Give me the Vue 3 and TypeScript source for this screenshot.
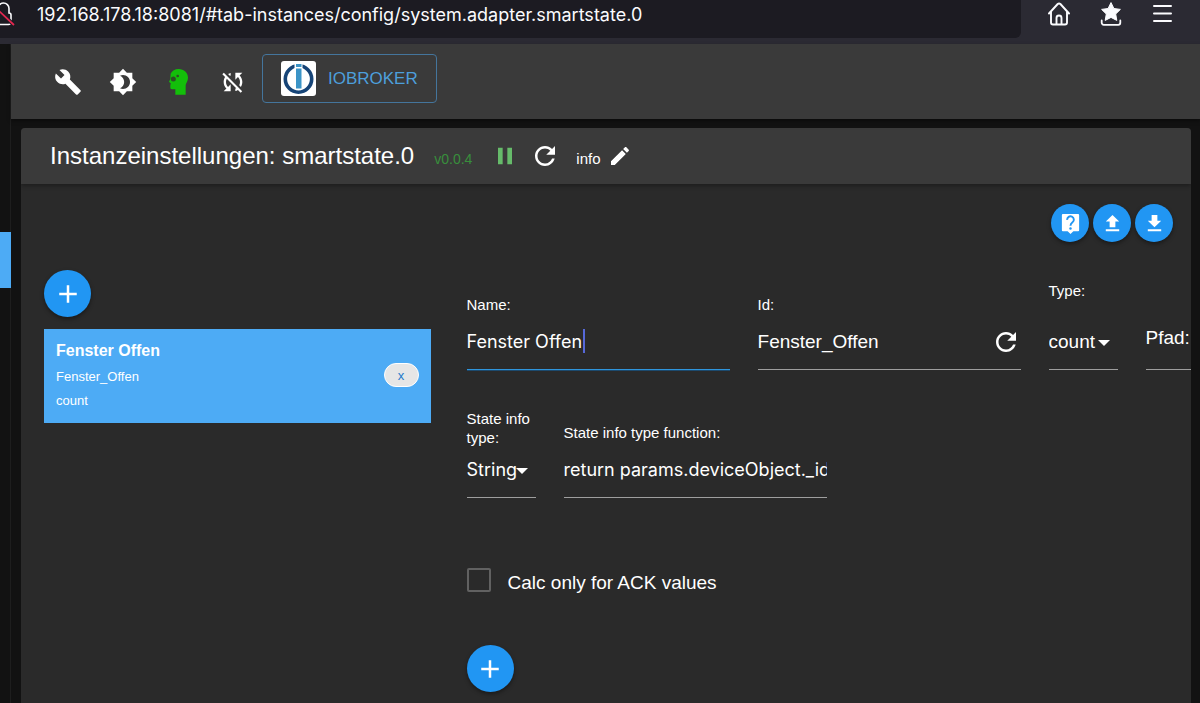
<script setup lang="ts">
import { ref } from 'vue'

interface IconDef {
  id: string
  label: string
  path: string
}

const url = ref('192.168.178.18:8081/#tab-instances/config/system.adapter.smartstate.0')

const refreshPath =
  'M17.65 6.35C16.2 4.9 14.21 4 12 4c-4.42 0-7.99 3.58-7.99 8s3.57 8 7.99 8c3.73 0 6.84-2.55 7.73-6h-2.08c-.82 2.33-3.04 4-5.65 4-3.31 0-6-2.69-6-6s2.69-6 6-6c1.66 0 3.14.69 4.22 1.78L13 11h7V4l-2.35 2.35z'
const plusPath = 'M19 13h-6v6h-2v-6H5v-2h6V5h2v6h6v2z'

const transferButtons: IconDef[] = [
  { id: 'upload', label: 'Upload', path: 'M5 20h14v-2H5v2zm0-10h4v6h6v-6h4l-7-7-7 7z' },
  { id: 'download', label: 'Download', path: 'M19 9h-4V3H9v6H5l7 7 7-7zM5 18v2h14v-2H5z' },
]

const form = ref({
  name: 'Fenster Offen',
  id: 'Fenster_Offen',
  type: 'count',
  path: '',
  infoType: 'String',
  infoFunction: 'return params.deviceObject._id',
  ackOnly: false,
})
</script>

<template>
  <div class="window">
    <header class="browser-bar">
      <div class="address">
        <svg class="lock" viewBox="0 0 15 30" aria-hidden="true">
          <path d="M-4 24.500H8.500a2.500 2.500 0 0 0 2.500-2.500V15a2 2 0 0 0-2-2V8.500A5.500 5.500 0 0 0-2 8.500" fill="none" stroke="#fbfbfe" stroke-width="1.600" />
          <path d="M-2 10L14 25" stroke="#1c1b22" stroke-width="4" />
          <path d="M-2 10L14 25" stroke="#e22850" stroke-width="1.800" />
        </svg>
        <input v-model="url" class="url" type="text" aria-label="URL" />
      </div>
      <div class="browser-actions">
        <button type="button" class="plain" aria-label="Home">
          <svg width="24" height="24" viewBox="0 0 24 24" fill="none" stroke="#fbfbfe" stroke-width="1.900" stroke-linecap="round" stroke-linejoin="round">
            <path d="M2 11.500L10.700 2a2 2 0 0 1 2.700 0L22 11.500" />
            <path d="M4 10v10.500a2 2 0 0 0 2 2h12a2 2 0 0 0 2-2V10" />
            <path d="M9.500 22V16a2.500 2.500 0 0 1 5 0v6" />
          </svg>
        </button>
        <button type="button" class="plain" aria-label="Bookmarks">
          <svg width="24" height="24" viewBox="0 0 24 24">
            <path d="M12 0.600l2.900 5.900 6.500.9-4.700 4.600 1.100 6.400-5.800-3-5.800 3 1.100-6.400L2.600 7.400l6.500-.9z" fill="#fbfbfe" stroke="#fbfbfe" stroke-linejoin="round" />
            <path d="M2.700 18.500v2.300a2 2 0 0 0 2 2h14.600a2 2 0 0 0 2-2v-2.300" fill="none" stroke="#fbfbfe" stroke-width="1.800" stroke-linecap="round" />
          </svg>
        </button>
        <button type="button" class="plain" aria-label="Menu">
          <svg width="24" height="24" viewBox="0 0 24 24" stroke="#fbfbfe" stroke-width="2" stroke-linecap="round">
            <path d="M3 4h17M3 11.500h17M3 19h17" />
          </svg>
        </button>
      </div>
    </header>

    <div class="app">
      <nav class="side">
        <a href="#tab-instances" class="side-active" aria-label="Instances"></a>
      </nav>

      <div class="main">
        <div class="toolbar">
          <div class="tools">
            <button type="button" class="plain" aria-label="Settings">
              <svg width="28" height="28" viewBox="0 0 24 24" fill="#fff">
                <path d="M22.700 19l-9.100-9.100c.9-2.300.4-5-1.500-6.900-2-2-5-2.400-7.400-1.300L9 6 6 9 1.600 4.700C.4 7.100.9 10.100 2.900 12.100c1.900 1.900 4.600 2.400 6.900 1.500l9.100 9.100c.4.4 1 .4 1.400 0l2.300-2.300c.5-.4.5-1.100.1-1.400z" />
              </svg>
            </button>
            <button type="button" class="plain" aria-label="Theme">
              <svg width="28" height="28" viewBox="0 0 24 24" fill="#fff">
                <path d="M20 8.690V4h-4.690L12 .69 8.690 4H4v4.690L.69 12 4 15.310V20h4.690L12 23.310 15.310 20H20v-4.690L23.310 12 20 8.690zM12 18c-.89 0-1.740-.2-2.500-.55C11.560 16.500 13 14.420 13 12s-1.440-4.500-3.500-5.450C10.260 6.200 11.110 6 12 6c3.310 0 6 2.690 6 6s-2.690 6-6 6z" />
              </svg>
            </button>
            <button type="button" class="plain" aria-label="Expert mode">
              <svg width="28" height="28" viewBox="0 0 84 84">
                <path d="M20 17C24 8 33 3 44 3C60 3 72 14 72 29C72 40 66 44 65 52V80H34V64H24C20 64 19 62 19 58V50L21 47L15 41L19 33Z" fill="#13bf0a" />
                <circle cx="28" cy="33" r="7.500" fill="#2c4f24" />
                <circle cx="41" cy="24" r="4" fill="#2c4f24" />
              </svg>
            </button>
            <button type="button" class="plain" aria-label="Sync disabled">
              <svg width="28" height="28" viewBox="0 0 24 24" fill="#fff">
                <path d="M10 6.350V4.260c-.8.21-1.550.54-2.230.96l1.460 1.460c.25-.12.5-.24.77-.33zm-7.140-.94l2.360 2.360C4.450 8.990 4 10.440 4 12c0 2.210.91 4.200 2.360 5.640L4 20h6v-6l-2.240 2.240C6.680 15.150 6 13.660 6 12c0-1 .25-1.940.68-2.770l8.080 8.080c-.25.13-.5.25-.77.34v2.090c.8-.21 1.550-.54 2.230-.96l2.360 2.360 1.270-1.270L4.140 4.140 2.860 5.410zM20 4h-6v6l2.240-2.240C17.320 8.850 18 10.340 18 12c0 1-.25 1.940-.68 2.770l1.460 1.460C19.550 15.010 20 13.560 20 12c0-2.210-.91-4.200-2.360-5.640L20 4z" />
              </svg>
            </button>
          </div>
          <button type="button" class="host">
            <svg width="35" height="35" viewBox="0 0 35 35" aria-hidden="true">
              <rect width="35" height="35" rx="3" fill="#fff" />
              <circle cx="17.500" cy="18" r="13.200" fill="none" stroke="#164477" stroke-width="3.600" />
              <rect x="13.500" y="2" width="8" height="6" fill="#fff" />
              <path d="M15 3h5.500v3H15zM15 7.500h5.500v20H15z" fill="#3b94c7" />
            </svg>
            <span>IOBROKER</span>
          </button>
        </div>

        <section class="panel">
          <header class="panel-head">
            <h1>Instanzeinstellungen: smartstate.0</h1>
            <span class="version">v0.0.4</span>
            <button type="button" class="plain pause" aria-label="Pause">
              <svg width="28" height="28" viewBox="0 0 24 24" fill="#66bb6a">
                <path d="M6 19h4V5H6v14zm8-14v14h4V5h-4z" />
              </svg>
            </button>
            <button type="button" class="plain restart" aria-label="Restart">
              <svg width="30" height="30" viewBox="0 0 24 24" fill="#fff"><path :d="refreshPath" /></svg>
            </button>
            <span class="level">info</span>
            <button type="button" class="plain edit" aria-label="Edit log level">
              <svg width="24" height="24" viewBox="0 0 24 24" fill="#fff">
                <path d="M3 17.250V21h3.750L17.810 9.940l-3.750-3.750L3 17.250zM20.710 7.040c.39-.39.39-1.020 0-1.410l-2.340-2.340c-.39-.39-1.020-.39-1.410 0l-1.830 1.830 3.750 3.750 1.830-1.830z" />
              </svg>
            </button>
          </header>

          <div class="actions">
            <button type="button" class="round small" aria-label="Help">
              <svg width="23" height="23" viewBox="0 0 24 24">
                <path d="M4 2h16a1 1 0 0 1 1 1v16a1 1 0 0 1-1 1h-5l-3 3-3-3H4a1 1 0 0 1-1-1V3a1 1 0 0 1 1-1z" fill="#fff" />
                <path d="M8.500 8.200a3.500 3.500 0 1 1 5.600 2.600c-1.300 1-2.100 1.700-2.100 3.600" fill="none" stroke="#2196f3" stroke-width="2" />
                <circle cx="12" cy="17.200" r="1.300" fill="#2196f3" />
              </svg>
            </button>
            <button v-for="b in transferButtons" :key="b.id" type="button" class="round small" :aria-label="b.label">
              <svg width="23" height="23" viewBox="0 0 24 24" fill="#fff"><path :d="b.path" /></svg>
            </button>
          </div>

          <div class="columns">
            <div class="list">
              <button type="button" class="round" aria-label="Add entry">
                <svg width="30" height="30" viewBox="0 0 24 24" fill="#fff"><path :d="plusPath" /></svg>
              </button>
              <ul class="entries">
                <li class="entry">
                  <div>
                    <strong>{{ form.name }}</strong>
                    <p>{{ form.id }}</p>
                    <p>{{ form.type }}</p>
                  </div>
                  <button type="button" class="remove">x</button>
                </li>
              </ul>
            </div>

            <form class="form" @submit.prevent>
              <div class="row">
                <div class="field wide">
                  <label for="f-name">Name:</label>
                  <div class="control">
                    <input id="f-name" v-model="form.name" class="ui active" type="text" />
                    <span class="caret"></span>
                  </div>
                </div>
                <div class="field wide">
                  <label for="f-id">Id:</label>
                  <div class="control">
                    <input id="f-id" v-model="form.id" type="text" />
                    <button type="button" class="plain regenerate" aria-label="Regenerate id">
                      <svg width="30" height="30" viewBox="0 0 24 24" fill="#fff"><path :d="refreshPath" /></svg>
                    </button>
                  </div>
                </div>
                <div class="field">
                  <label for="f-type" class="two-line">Type:</label>
                  <div class="control">
                    <select id="f-type" v-model="form.type">
                      <option>count</option>
                    </select>
                    <svg class="arrow" width="12" height="6" viewBox="0 0 12 6"><path d="M0 0h12L6 6z" fill="#fff" /></svg>
                  </div>
                </div>
                <div class="field wide">
                  <div class="control">
                    <input id="f-path" v-model="form.path" type="text" />
                    <label for="f-path" class="inside">Pfad:</label>
                  </div>
                </div>
              </div>

              <div class="row">
                <div class="field">
                  <label for="f-info" class="two-line">State info type:</label>
                  <div class="control">
                    <select id="f-info" v-model="form.infoType" class="ui">
                      <option>String</option>
                    </select>
                    <svg class="arrow" width="12" height="6" viewBox="0 0 12 6"><path d="M0 0h12L6 6z" fill="#fff" /></svg>
                  </div>
                </div>
                <div class="field wide">
                  <label for="f-fn">State info type function:</label>
                  <div class="control">
                    <input id="f-fn" v-model="form.infoFunction" class="ui" type="text" />
                  </div>
                </div>
              </div>

              <label class="check">
                <input v-model="form.ackOnly" type="checkbox" />
                <span>Calc only for ACK values</span>
              </label>

              <button type="button" class="round" aria-label="Add state">
                <svg width="30" height="30" viewBox="0 0 24 24" fill="#fff"><path :d="plusPath" /></svg>
              </button>
            </form>
          </div>
        </section>
      </div>
    </div>
  </div>
</template>

<style>
body {
  margin: 0;
  background: #121212;
}
</style>

<style scoped>
* {
  box-sizing: border-box;
}

.window {
  display: flex;
  flex-direction: column;
  min-height: 100vh;
  color: #fff;
  font-family: "Liberation Sans", Arial, sans-serif;
}

button,
input,
select {
  margin: 0;
  padding: 0;
  border: 0;
  background: none;
  color: inherit;
  font-family: inherit;
  outline: none;
}

button {
  cursor: pointer;
}

.plain,
.round {
  display: flex;
  align-items: center;
  justify-content: center;
  flex: none;
}

.browser-bar {
  display: flex;
  height: 44px;
  padding-bottom: 6px;
  background: #2b2a33;
}

.address {
  display: flex;
  flex: 1;
  align-items: flex-start;
  background: #1c1b22;
  border-bottom-right-radius: 6px;
}

.lock {
  flex: none;
  width: 15px;
  height: 30px;
}

.url {
  flex: 1;
  height: 28px;
  padding-left: 22px;
  color: #fbfbfe;
  font-family: Inter, "Liberation Sans", sans-serif;
  font-size: 18px;
}

.browser-actions {
  display: flex;
  align-items: center;
  gap: 28px;
  height: 28px;
  padding: 0 25px 0 26px;
}

.app {
  display: flex;
  flex: 1;
}

.side {
  flex: none;
  width: 11px;
  padding-top: 188px;
  background: #121212;
  border-right: 1px solid #1e1e1e;
}

.side-active {
  display: block;
  height: 56px;
  margin-right: -1px;
  background: #4dabf5;
}

.main {
  display: flex;
  flex: 1;
  flex-direction: column;
  min-width: 0;
}

.toolbar {
  display: flex;
  align-items: flex-start;
  gap: 15px;
  height: 75px;
  padding-left: 43px;
  background: #3a3a3a;
  box-shadow: 0 2px 4px rgba(0, 0, 0, 0.4);
}

.tools {
  display: flex;
  align-items: center;
  gap: 27px;
  height: 75px;
}

.host {
  display: flex;
  align-items: center;
  gap: 12px;
  height: 49px;
  margin-top: 10px;
  padding: 0 18px;
  border: 1px solid #44759c;
  border-radius: 4px;
  color: #4d9fdc;
  font-size: 17px;
}

.panel {
  display: flex;
  flex: 1;
  flex-direction: column;
  margin: 9px 9px 0 10px;
  overflow: hidden;
  border-radius: 4px 4px 0 0;
  background: #2a2a2a;
}

.panel-head {
  display: flex;
  align-items: center;
  height: 56px;
  padding-left: 29px;
  background: #3a3a3a;
  box-shadow: 0 2px 4px rgba(0, 0, 0, 0.3);
}

h1 {
  margin: 0;
  font-size: 24px;
  font-weight: 400;
  white-space: nowrap;
}

.version {
  margin-left: 20px;
  padding-top: 5px;
  color: #388e3c;
  font-size: 14px;
}

.pause {
  margin-left: 19px;
}

.restart {
  margin-left: 11px;
}

.level {
  margin-left: 16px;
  padding-top: 5px;
  font-size: 15px;
}

.edit {
  margin-left: 7px;
}

.actions {
  display: flex;
  justify-content: flex-end;
  gap: 4px;
  padding: 20px 18px 0 0;
}

.round {
  width: 47px;
  height: 47px;
  border-radius: 50%;
  background: #2196f3;
  box-shadow: 0 2px 4px rgba(0, 0, 0, 0.4);
}

.round.small {
  width: 38px;
  height: 38px;
}

.columns {
  display: flex;
  gap: 36px;
  padding: 28px 0 11px 23px;
}

.list {
  flex: none;
  width: 33.700%;
}

.entries {
  margin: 12px 0 0;
  padding: 0;
  list-style: none;
}

.entry {
  display: flex;
  align-items: center;
  justify-content: space-between;
  height: 94px;
  padding: 0 12px 2px;
  background: #4dabf5;
}

.entry strong {
  display: block;
  font-size: 16px;
  line-height: 28px;
}

.entry p {
  margin: 0;
  font-size: 13px;
  line-height: 24px;
}

.remove {
  width: 35px;
  height: 24px;
  border: 1px solid #fff;
  border-radius: 12px;
  background: #e6e6e6;
  color: #1f7acb;
  font-size: 13px;
}

.form {
  flex: 1;
  min-width: 0;
  padding-top: 11px;
}

.row {
  display: grid;
  grid-template-columns: repeat(12, 69px);
  column-gap: 28px;
  align-items: end;
  min-height: 89px;
  margin-bottom: 39px;
}

.wide {
  grid-column: span 3;
}

.field label {
  display: block;
  font-size: 15px;
  line-height: 19px;
}

.field .two-line {
  height: 38px;
}

.control {
  position: relative;
  display: flex;
}

.control input {
  width: 100%;
  height: 56px;
  border-bottom: 1px solid #9e9e9e;
  font-size: 19px;
}

.control select {
  width: 100%;
  height: 51px;
  padding-bottom: 6px;
  border-bottom: 1px solid #9e9e9e;
  border-radius: 0;
  appearance: none;
  font-size: 19px;
}

.control .ui {
  font-family: Inter, "Liberation Sans", sans-serif;
  font-size: 18px;
}

.control input.active {
  border-bottom: 1px solid #2f95dc;
  box-shadow: 0 1px 0 #1c4a6e;
}

.caret {
  position: absolute;
  top: 15px;
  left: 116px;
  width: 2px;
  height: 24px;
  background: #5668d8;
}

.regenerate {
  position: absolute;
  top: 13px;
  right: 0;
}

.arrow {
  position: absolute;
  top: 21px;
  right: 8px;
}

.field .inside {
  position: absolute;
  top: 14px;
  left: 0;
  font-size: 19px;
}

.check {
  display: flex;
  align-items: center;
  gap: 17px;
  width: max-content;
  height: 30px;
  margin: 67px 0 50px;
  font-size: 19px;
}

.check input {
  width: 24px;
  height: 24px;
  border: 2px solid #616161;
  border-radius: 2px;
  appearance: none;
}

.check span {
  padding-top: 5px;
}

.check input:checked {
  background: #2196f3;
}
</style>
